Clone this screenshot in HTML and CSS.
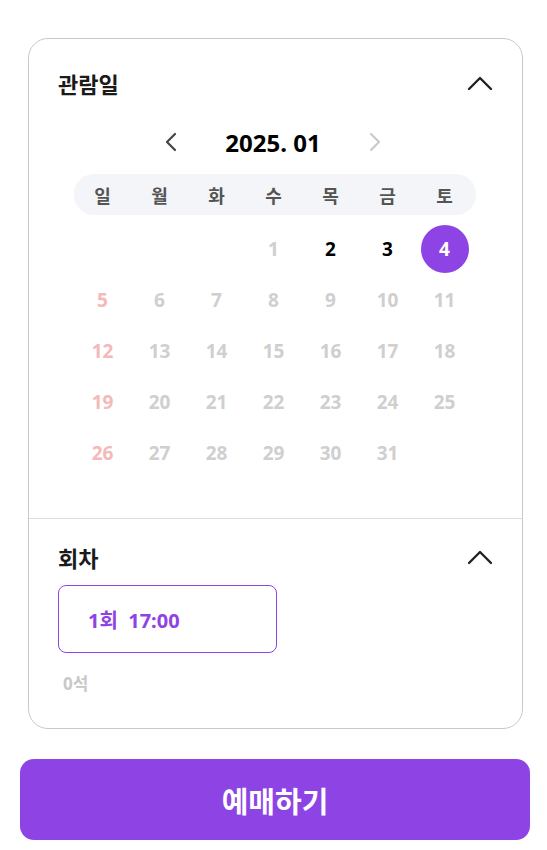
FILE: index.html
```html
<!DOCTYPE html>
<html lang="ko">
<head>
    <meta charset="UTF-8">
    <meta name="viewport" content="width=device-width, initial-scale=1.0">
    <title>예매</title>
    <link rel="stylesheet" href="styles.css">
</head>
<body>
    <div class="booking">
        <div class="card">
            <div class="section date-section">
                <div class="section-head">
                    <h3>관람일</h3>
                    <svg class="toggle" width="26" height="16" viewBox="0 0 26 16"><path d="M2 14 L13 3 L24 14" fill="none" stroke="#222" stroke-width="2.4" stroke-linecap="round" stroke-linejoin="round"/></svg>
                </div>

                <div class="calendar">
                    <div class="month-nav">
                        <svg class="nav-arrow" width="14" height="20" viewBox="0 0 14 20"><path d="M11 2 L3 10 L11 18" fill="none" stroke="#444" stroke-width="2.2" stroke-linecap="round" stroke-linejoin="round"/></svg>
                        <span class="month">2025. 01</span>
                        <svg class="nav-arrow" width="14" height="20" viewBox="0 0 14 20"><path d="M3 2 L11 10 L3 18" fill="none" stroke="#c8c8c8" stroke-width="2" stroke-linecap="round" stroke-linejoin="round"/></svg>
                    </div>
                    <div class="weekdays">
                        <span>일</span><span>월</span><span>화</span><span>수</span><span>목</span><span>금</span><span>토</span>
                    </div>
                    <div class="days" id="days"></div>
                </div>
            </div>

            <div class="section round-section">
                <div class="section-head">
                    <h3>회차</h3>
                    <svg class="toggle" width="26" height="16" viewBox="0 0 26 16"><path d="M2 14 L13 3 L24 14" fill="none" stroke="#222" stroke-width="2.4" stroke-linecap="round" stroke-linejoin="round"/></svg>
                </div>
                <button type="button" class="round-btn">1회&nbsp; 17:00</button>
                <div class="seats">0석</div>
            </div>
        </div>

        <button type="button" class="book-btn">예매하기</button>
    </div>

    <script>
        const days = document.getElementById('days');
        const firstDay = 3;
        const lastDate = 31;
        const selected = 4;

        for (let i = 0; i < firstDay; i++) {
            days.appendChild(document.createElement('span'));
        }
        for (let d = 1; d <= lastDate; d++) {
            const cell = document.createElement('span');
            cell.textContent = d;
            const dow = (firstDay + d - 1) % 7;
            if (d === selected) cell.className = 'selected';
            else if (d === 2 || d === 3) cell.className = 'open';
            else if (dow === 0) cell.className = 'sunday';
            days.appendChild(cell);
        }
    </script>
</body>
</html>
```

FILE: styles.css
```css
body {
    margin: 0;
    font-family: "Noto Sans", "Noto Sans CJK KR", sans-serif;
    background: #fff;
    color: #111;
}
.booking {
    width: 510px;
    padding: 38px 0 0 20px;
}
.card {
    margin: 0 7px 0 8px;
    border: 1px solid #c9c9c9;
    border-radius: 20px;
}
.section {
    padding: 0 29px 0 29px;
}
.date-section {
    padding-top: 27px;
    padding-bottom: 40px;
    border-bottom: 1px solid #dcdcdc;
}
.section-head {
    display: flex;
    justify-content: space-between;
    align-items: center;
    height: 34px;
}
.section-head h3 {
    margin: 0;
    font-size: 22px;
    font-weight: 600;
    color: #1a1a1a;
}
.calendar {
    width: 402px;
    margin: 22px 0 0 16px;
}
.month-nav {
    display: flex;
    justify-content: center;
    align-items: center;
    gap: 47px;
    height: 40px;
    padding-right: 4px;
}
.month {
    font-size: 24px;
    font-weight: 700;
    color: #000;
}
.weekdays {
    display: grid;
    grid-template-columns: repeat(7, 57px);
    align-items: center;
    height: 41px;
    margin-top: 12px;
    background: #f4f5f8;
    border-radius: 20px;
}
.weekdays span {
    text-align: center;
    font-size: 18px;
    font-weight: 700;
    color: #555;
}
.days {
    display: grid;
    grid-template-columns: repeat(7, 57px);
    grid-auto-rows: 51px;
    margin-top: 8px;
}
.days span {
    display: flex;
    justify-content: center;
    align-items: center;
    font-size: 19px;
    font-weight: 700;
    color: #cfcfcf;
}
.days .sunday {
    color: #f4b9b9;
}
.days .open {
    color: #000;
}
.days .selected {
    width: 48px;
    height: 48px;
    margin: auto;
    border-radius: 50%;
    background: #8e44e4;
    color: #fff;
}
.round-section {
    padding-top: 21px;
    padding-bottom: 33px;
}
.round-btn {
    display: block;
    width: 219px;
    height: 68px;
    margin-top: 11px;
    padding: 0 0 0 29px;
    text-align: left;
    background: #fff;
    border: 1px solid #8e44e4;
    border-radius: 8px;
    font-family: inherit;
    font-size: 20px;
    font-weight: 700;
    color: #8e44e4;
    cursor: pointer;
}
.seats {
    margin: 17px 0 0 5px;
    font-size: 17px;
    font-weight: 700;
    color: #c8c8c8;
}
.book-btn {
    display: block;
    width: 510px;
    height: 81px;
    margin-top: 30px;
    border: none;
    border-radius: 14px;
    background: #8e44e4;
    color: #fff;
    font-family: inherit;
    font-size: 29px;
    font-weight: 700;
    cursor: pointer;
}
```
